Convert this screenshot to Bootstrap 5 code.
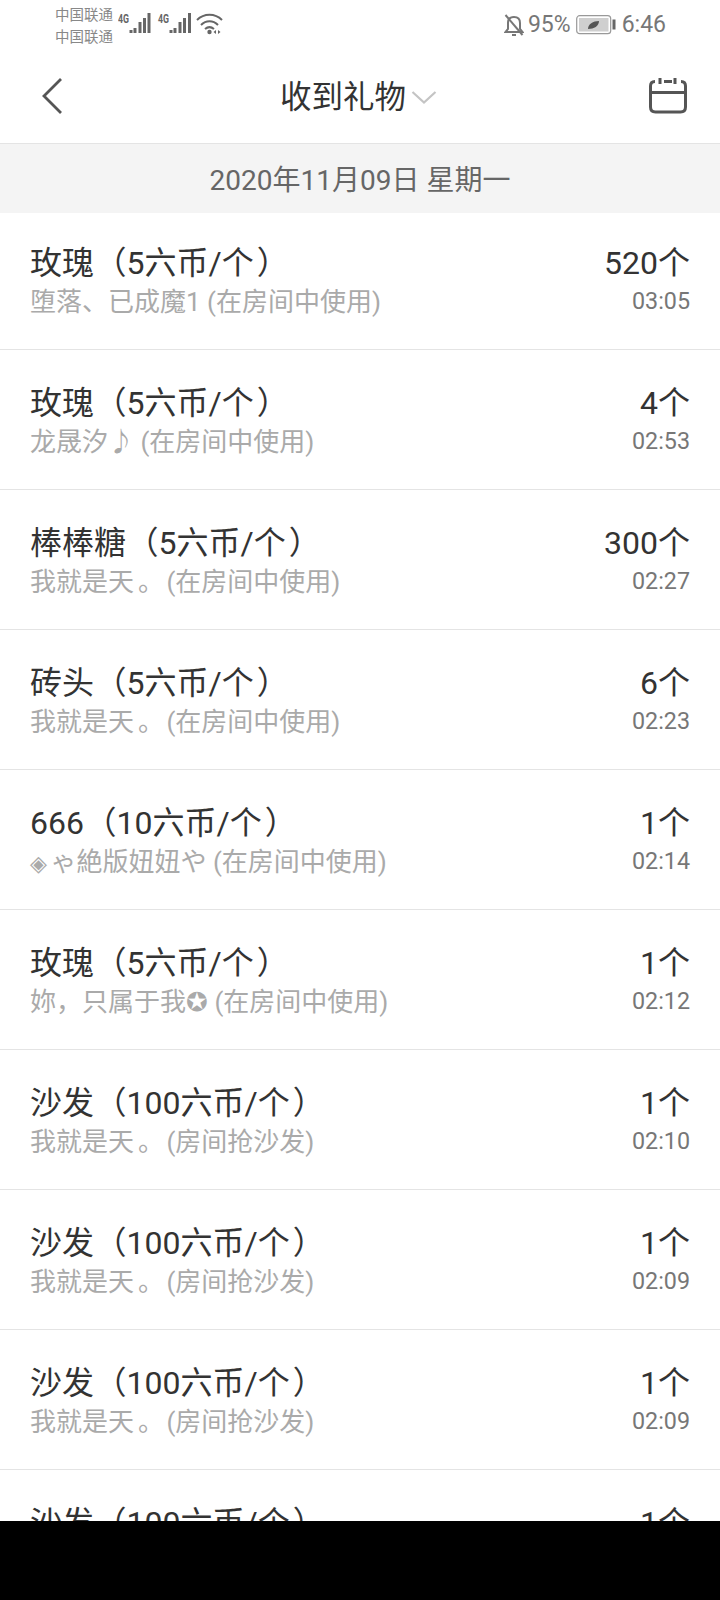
<!DOCTYPE html>
<html lang="zh-CN">
<head>
    <meta charset="UTF-8">
    <meta name="viewport" content="width=device-width, initial-scale=1.0">
    <title>收到礼物</title>
    <link href="https://cdn.jsdelivr.net/npm/bootstrap@5.3.0/dist/css/bootstrap.min.css" rel="stylesheet">
    <style>
        html, body { height: 100%; }
        body {
            background: #fff;
            font-family: Roboto, "Noto Sans CJK SC", sans-serif;
            color: #333;
            overflow: hidden;
        }
        .app-page { height: 1600px; width: 720px; }
        .status-bar { height: 50px; padding: 4px 54px 0 55px; }
        .carrier { font-size: 14.5px; line-height: 22px; color: #888; width: 60px; margin-top: 1px; }
        .status-text { font-size: 23px; line-height: 42px; color: #777; }
        .title-bar { height: 94px; padding: 0 33px 0 36px; border-bottom: 1px solid #e4e4e4; }
        .title-text { font-size: 31.5px; line-height: 44px; color: #333; }
        .title-center { left: 280px; top: 26px; }
        .date-bar { height: 69px; padding-top: 4px; background: #f4f4f4; font-size: 28px; color: #666; }
        .gift-list { flex: 1 1 0; overflow: hidden; }
        .gift-row {
            height: 140px;
            padding: 31px 30px 0 30px;
            border-color: #e4e4e4;
            flex: none;
        }
        .gift-row:first-child { height: 137px; padding-top: 28px; }
        .gift-name { font-size: 32px; line-height: 44px; color: #333; }
        .gift-sub { font-size: 26px; line-height: 36px; color: #aaa; margin-top: -1px; }
        .gift-time { font-size: 23.3px; line-height: 36px; color: #777; margin-top: -2px; }
        .sub-mark { font-size: 22px; display: inline-block; width: 20.5px; }
        .sub-stop { margin-left: 4px; margin-right: 2.4px; }
        .paren-open { margin-left: 0.5px; }
        .unit-gap { letter-spacing: 3px; }
        .nav-black { height: 79px; background: #000; flex: none; }
    </style>
</head>
<body>
    <div class="app-page d-flex flex-column">
        <!-- status bar -->
        <div class="status-bar d-flex justify-content-between align-items-start">
            <div class="d-flex align-items-start">
                <div class="carrier">中国联通<br>中国联通</div>
                <svg style="margin-left:3px" width="106" height="36" viewBox="0 0 106 36">
                    <g fill="#666">
                        <text x="0" y="19" font-size="13" font-weight="700" font-family="Roboto" textLength="11" lengthAdjust="spacingAndGlyphs">4G</text>
                        <text x="40" y="19" font-size="13" font-weight="700" font-family="Roboto" textLength="11" lengthAdjust="spacingAndGlyphs">4G</text>
                        <rect x="11.500" y="26" width="3" height="3"/><rect x="15.500" y="24" width="3" height="5"/>
                        <rect x="20.500" y="18" width="3" height="11"/><rect x="25" y="14" width="3" height="15"/><rect x="29.500" y="9" width="3" height="20"/>
                        <rect x="51.500" y="26" width="3" height="3"/><rect x="55.500" y="24" width="3" height="5"/>
                        <rect x="60.500" y="18" width="3" height="11"/><rect x="65" y="14" width="3" height="15"/><rect x="70" y="9" width="3" height="20"/>
                    </g>
                    <g fill="none" stroke="#666" stroke-width="2">
                        <path d="M79 16 C86 9 97 9 104 16"/>
                        <path d="M83 21 C88 16 95 16 100 21"/>
                        <path d="M87 25 C90 22.500 93 22.500 96 25"/>
                    </g>
                    <circle cx="91.500" cy="28" r="2.200" fill="#666"/>
                    <path d="M98 26 l-2.500 2 l2.500 2z M100 26 l2.500 2 l-2.500 2z" fill="#666"/>
                </svg>
            </div>
            <div class="d-flex align-items-center">
                <svg width="20" height="24" viewBox="0 0 20 24">
                    <path d="M4 16 V10 C4 6 6.500 4 10 4 C13.500 4 16 6 16 10 V16 L18.500 19 H1.500 Z" fill="none" stroke="#777" stroke-width="2"/>
                    <path d="M8 21 h4 v2 h-4z" fill="#777"/>
                    <path d="M1.500 2 L18.500 22" stroke="#777" stroke-width="2"/>
                </svg>
                <span class="status-text ms-1">95%</span>
                <svg style="margin:0 6px 0 5px" width="40" height="20" viewBox="0 0 40 20">
                    <rect x="0.700" y="0.700" width="34" height="18" rx="3" fill="#fff" stroke="#999" stroke-width="1.200"/>
                    <rect x="3" y="3" width="29.500" height="13.500" fill="#cfcfcf"/>
                    <path d="M12 14 C12 9 17 6 23 6 C23 11 18 14 12 14Z" fill="#555"/>
                    <rect x="36.500" y="4.500" width="3" height="10" fill="#666"/>
                </svg>
                <span class="status-text">6:46</span>
            </div>
        </div>

        <!-- title bar -->
        <div class="title-bar d-flex justify-content-between align-items-center position-relative">
            <svg width="27" height="38" viewBox="0 0 27 38">
                <path d="M25 1 L8 18 L25 35" fill="none" stroke="#555" stroke-width="2.800"/>
            </svg>
            <div class="d-flex align-items-center position-absolute title-center">
                <span class="title-text">收到礼物</span>
                <svg style="margin-left:5px" width="26" height="16" viewBox="0 0 26 16">
                    <path d="M1.500 2 L13 12.500 L24.500 2" fill="none" stroke="#c4c4c4" stroke-width="2.200"/>
                </svg>
            </div>
            <svg width="38" height="38" viewBox="0 0 38 38">
                <path d="M6 3.500 C3 3.500 1.500 5 1.500 8 V29 C1.500 32.500 3 34 6.500 34 H31.500 C35 34 36.500 32.500 36.500 29 V8 C36.500 5 35 3.500 32 3.500" fill="none" stroke="#555" stroke-width="3"/>
                <path d="M15 3.500 H23 M11 0 V6 M26 0 V6 M1.500 14.500 H36.500" fill="none" stroke="#555" stroke-width="3"/>
            </svg>
        </div>

        <!-- date -->
        <div class="date-bar d-flex justify-content-center align-items-center flex-none">2020年11月09日 星期一</div>

        <!-- gift rows, filled by script below -->
        <div class="gift-list list-group list-group-flush rounded-0" id="gift-list"></div>

        <div class="nav-black"></div>
    </div>

    <script>
        const stop = '<span class="sub-stop">。</span>';
        const gifts = [
            ["玫瑰", "5", "堕落、已成魔1 (在房间中使用)", "520个", "03:05"],
            ["玫瑰", "5", "龙晟汐♪ (在房间中使用)", "4个", "02:53"],
            ["棒棒糖", "5", `我就是天${stop}(在房间中使用)`, "300个", "02:27"],
            ["砖头", "5", `我就是天${stop}(在房间中使用)`, "6个", "02:23"],
            ["666", "10", '<span class="sub-mark">◈</span>ゃ絶版妞妞や (在房间中使用)', "1个", "02:14"],
            ["玫瑰", "5", "妳，只属于我✪ (在房间中使用)", "1个", "02:12"],
            ["沙发", "100", `我就是天${stop}(房间抢沙发)`, "1个", "02:10"],
            ["沙发", "100", `我就是天${stop}(房间抢沙发)`, "1个", "02:09"],
            ["沙发", "100", `我就是天${stop}(房间抢沙发)`, "1个", "02:09"],
            ["沙发", "100", `我就是天${stop}(房间抢沙发)`, "1个", "02:09"]
        ];
        document.getElementById('gift-list').innerHTML = gifts.map(g => `
            <div class="list-group-item gift-row d-flex justify-content-between">
                <div>
                    <div class="gift-name">${g[0]}<span class="paren-open">（</span>${g[1]}六币/<span class="unit-gap">个</span>）</div>
                    <div class="gift-sub">${g[2]}</div>
                </div>
                <div class="text-end">
                    <div class="gift-name">${g[3]}</div>
                    <div class="gift-time">${g[4]}</div>
                </div>
            </div>`).join("");
    </script>
</body>
</html>
